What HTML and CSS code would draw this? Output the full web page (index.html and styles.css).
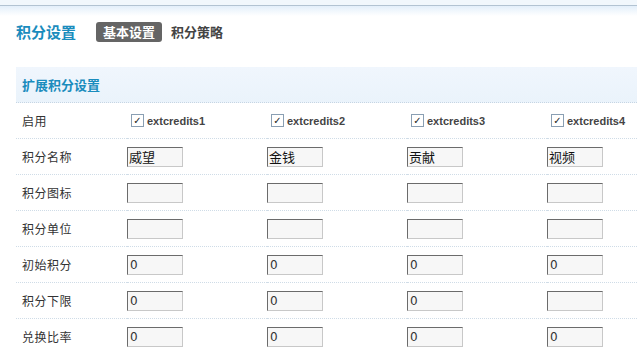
FILE: index.html
```html
<!DOCTYPE html>
<html lang="zh">
<head>
<meta charset="utf-8">
<link rel="stylesheet" href="styles.css">
</head>
<body>
<div class="topbar"></div>
<div class="page">
  <div class="header">
    <h1 class="title">积分设置</h1>
    <nav class="tabs">
      <span class="tab active">基本设置</span>
      <span class="tab">积分策略</span>
    </nav>
  </div>
  <div class="section-title">扩展积分设置</div>
  <table class="grid">
    <tr>
      <th>启用</th>
      <td><label class="chk"><span class="box">&#10003;</span>extcredits1</label></td>
      <td><label class="chk"><span class="box">&#10003;</span>extcredits2</label></td>
      <td><label class="chk"><span class="box">&#10003;</span>extcredits3</label></td>
      <td><label class="chk"><span class="box">&#10003;</span>extcredits4</label></td>
    </tr>
    <tr>
      <th>积分名称</th>
      <td><span class="inp cjk">威望</span></td>
      <td><span class="inp cjk">金钱</span></td>
      <td><span class="inp cjk">贡献</span></td>
      <td><span class="inp cjk">视频</span></td>
    </tr>
    <tr>
      <th>积分图标</th>
      <td><span class="inp"></span></td>
      <td><span class="inp"></span></td>
      <td><span class="inp"></span></td>
      <td><span class="inp"></span></td>
    </tr>
    <tr>
      <th>积分单位</th>
      <td><span class="inp"></span></td>
      <td><span class="inp"></span></td>
      <td><span class="inp"></span></td>
      <td><span class="inp"></span></td>
    </tr>
    <tr>
      <th>初始积分</th>
      <td><span class="inp">0</span></td>
      <td><span class="inp">0</span></td>
      <td><span class="inp">0</span></td>
      <td><span class="inp">0</span></td>
    </tr>
    <tr>
      <th>积分下限</th>
      <td><span class="inp">0</span></td>
      <td><span class="inp">0</span></td>
      <td><span class="inp">0</span></td>
      <td><span class="inp"></span></td>
    </tr>
    <tr>
      <th>兑换比率</th>
      <td><span class="inp">0</span></td>
      <td><span class="inp">0</span></td>
      <td><span class="inp">0</span></td>
      <td><span class="inp">0</span></td>
    </tr>
  </table>
</div>
</body>
</html>
```
FILE: styles.css
```css
html, body {
  margin: 0;
  padding: 0;
  background: #fff;
  overflow: hidden;
  font-family: "Noto Sans CJK SC", "Noto Sans", sans-serif;
  font-size: 12px;
  color: #333;
}
.topbar {
  height: 5px;
  background: #f1f7fc;
  border-bottom: 1px solid #b2c3d2;
}
.page {
  background: linear-gradient(#e3effa, #ffffff 10px);
  padding: 0 0 0 16px;
}
.header {
  display: flex;
  align-items: center;
  height: 52px;
  padding-bottom: 9px;
}
.title {
  margin: 0;
  font-size: 15px;
  font-weight: bold;
  color: #1a8cbd;
  width: 80px;
  line-height: 20px;
}
.tabs {
  display: flex;
  align-items: center;
  gap: 4px;
}
.tab {
  font-size: 13px;
  font-weight: bold;
  color: #444;
  line-height: 20px;
  padding: 0 5px;
  border-radius: 3px;
}
.tab.active {
  background: #656565;
  color: #fff;
  padding: 0 7px;
}
.section-title {
  height: 35px;
  line-height: 35px;
  background: linear-gradient(#f0f6fd, #eaf3fb);
  border-bottom: 1px dotted #c5d5e3;
  color: #1a8cbd;
  font-weight: bold;
  font-size: 13px;
  padding-left: 6px;
}
.grid {
  border-collapse: collapse;
  table-layout: fixed;
  width: 671px;
}
.grid th,
.grid td {
  height: 35px;
  padding: 0;
  border-bottom: 1px dotted #cfdce7;
  vertical-align: middle;
  text-align: left;
}
.grid th {
  width: 105px;
  padding-left: 6px;
  font-weight: normal;
  font-size: 12px;
  letter-spacing: 0.5px;
  color: #333;
}
.grid td {
  width: 140px;
}
.chk {
  display: flex;
  align-items: center;
  gap: 3px;
  padding-left: 4px;
  font-family: "Liberation Sans", Arial, sans-serif;
  font-weight: bold;
  font-size: 11px;
  color: #444;
}
.box {
  width: 11px;
  height: 11px;
  border: 1px solid #8a9fb3;
  background: #fff;
  font-family: "DejaVu Sans", sans-serif;
  font-size: 10px;
  line-height: 11px;
  text-align: center;
  color: #222;
  font-weight: bold;
}
.inp {
  display: block;
  box-sizing: border-box;
  width: 56px;
  height: 20px;
  background: #f7f7f7;
  border-top: 1px solid #6b6b6b;
  border-left: 1px solid #6b6b6b;
  border-right: 1px solid #c8c8c8;
  border-bottom: 1px solid #c8c8c8;
  font-family: "DejaVu Sans", sans-serif;
  font-size: 12px;
  line-height: 18px;
  padding-left: 2px;
  color: #333;
}
.inp.cjk {
  font-family: "Noto Sans CJK SC", sans-serif;
  font-size: 13px;
  padding-left: 1px;
  color: #111;
}
```
